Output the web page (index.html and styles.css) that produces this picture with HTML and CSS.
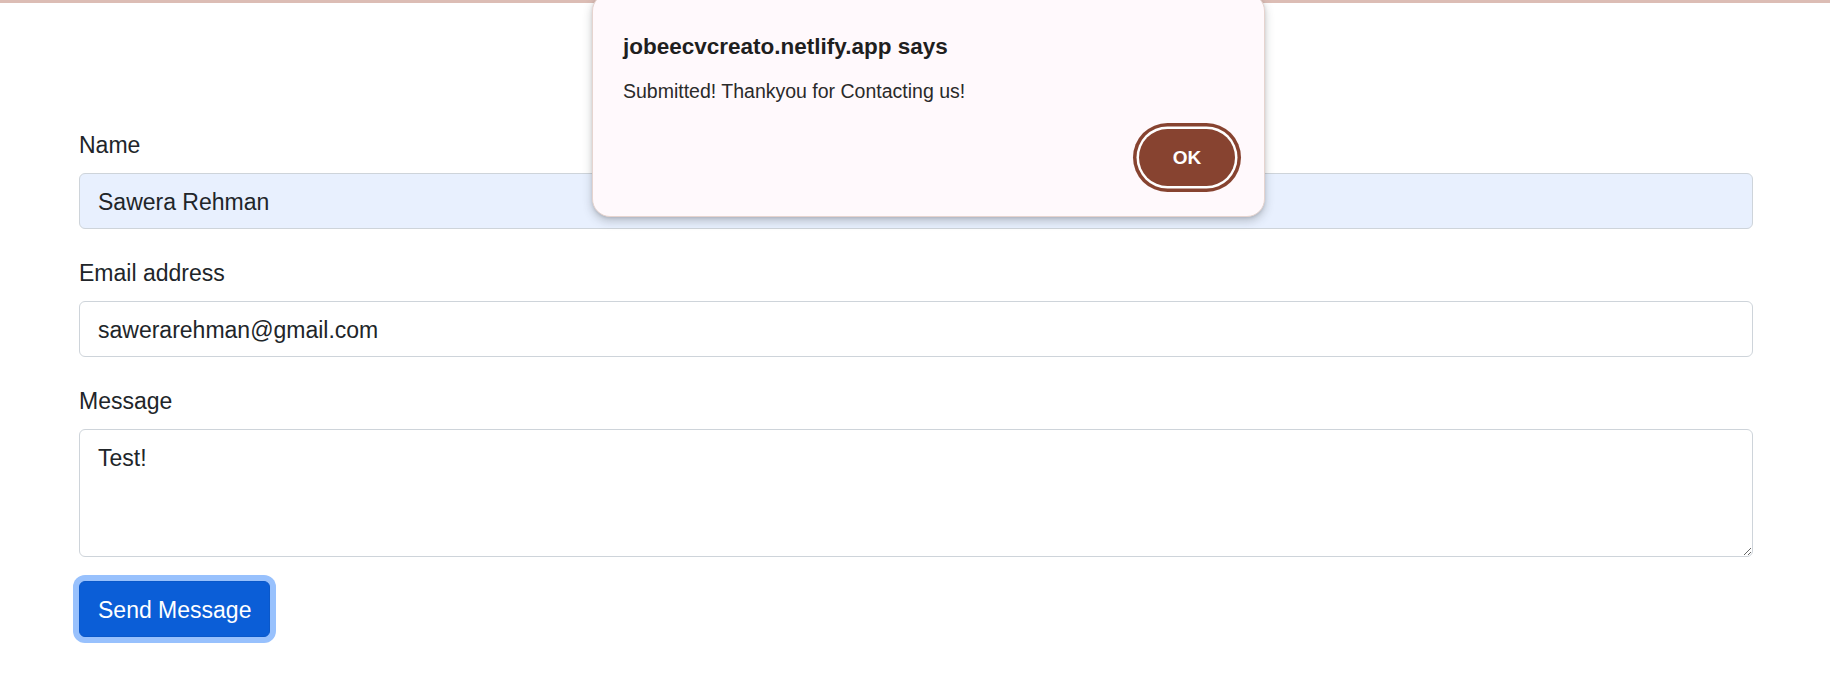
FILE: index.html
```html
<!DOCTYPE html>
<html lang="en">
<head>
<meta charset="utf-8">
<title>Contact</title>
<link rel="stylesheet" href="styles.css">
</head>
<body>
<div class="topline"></div>
<main class="container">
  <form class="contact-form">
    <div class="field">
      <label class="field-label" for="name">Name</label>
      <input class="field-input autofilled" id="name" type="text" value="Sawera Rehman">
    </div>
    <div class="field">
      <label class="field-label" for="email">Email address</label>
      <input class="field-input" id="email" type="email" value="sawerarehman@gmail.com">
    </div>
    <div class="field">
      <label class="field-label" for="message">Message</label>
      <textarea class="field-input field-textarea" id="message" rows="3">Test!</textarea>
    </div>
    <button class="send-btn" type="button">Send Message</button>
  </form>
</main>

<div class="alert-dialog" role="alertdialog">
  <div class="alert-title">jobeecvcreato.netlify.app says</div>
  <div class="alert-message">Submitted! Thankyou for Contacting us!</div>
  <div class="alert-actions">
    <button class="alert-ok" type="button">OK</button>
  </div>
</div>
</body>
</html>
```

FILE: styles.css
```css
* {
  box-sizing: border-box;
}

html, body {
  margin: 0;
  padding: 0;
  background: #ffffff;
}

body {
  font-family: "Liberation Sans", Arial, sans-serif;
  color: #212529;
  width: 1830px;
  height: 681px;
  overflow: hidden;
  position: relative;
}

.topline {
  height: 3px;
  background: #dcbdb5;
}

.container {
  max-width: 1710px;
  margin: 0 auto;
  padding: 122px 17px 0 19px;
}

.contact-form {
  display: flex;
  flex-direction: column;
}

.field {
  display: flex;
  flex-direction: column;
  margin-bottom: 24px;
}

.field-label {
  font-size: 23px;
  line-height: 36px;
  padding-top: 2px;
  margin-bottom: 10px;
  color: #212529;
}

.field-input {
  display: block;
  width: 100%;
  height: 56px;
  padding: 10px 18px 8px 18px;
  font-family: "Liberation Sans", Arial, sans-serif;
  font-size: 23px;
  line-height: 36px;
  color: #212529;
  background: #ffffff;
  border: 1px solid #ced4da;
  border-radius: 6px;
  outline: none;
}

.autofilled {
  background: #e8f0fe;
}

.field-textarea {
  height: 128px;
  resize: vertical;
}

.send-btn {
  align-self: flex-start;
  height: 56px;
  padding: 10px 18px 8px 18px;
  font-family: "Liberation Sans", Arial, sans-serif;
  font-size: 23px;
  line-height: 36px;
  color: #ffffff;
  background: #0b5ed7;
  border: 1px solid #0a58ca;
  border-radius: 6px;
  box-shadow: 0 0 0 6px #98c1fd;
}

.alert-dialog {
  position: absolute;
  left: 592px;
  top: -7px;
  width: 673px;
  padding: 40px 29px 30px 30px;
  background: #fff9fc;
  border: 1px solid #e6d4cf;
  border-radius: 18px;
  box-shadow: 0 4px 10px rgba(60, 64, 67, 0.28), 0 1px 3px rgba(60, 64, 67, 0.15);
}

.alert-title {
  font-size: 22.5px;
  line-height: 26px;
  font-weight: 700;
  color: #1f1f1f;
  margin-bottom: 19px;
}

.alert-message {
  font-size: 19.5px;
  line-height: 24px;
  color: #2a2a2a;
  margin-bottom: 26px;
}

.alert-actions {
  display: flex;
  justify-content: flex-end;
}

.alert-ok {
  width: 96px;
  height: 57px;
  border: none;
  border-radius: 29px;
  background: #874330;
  color: #ffffff;
  font-family: "Liberation Sans", Arial, sans-serif;
  font-size: 19px;
  font-weight: 700;
  box-shadow: 0 0 0 2.5px #ffffff, 0 0 0 6px #874330;
}
```
